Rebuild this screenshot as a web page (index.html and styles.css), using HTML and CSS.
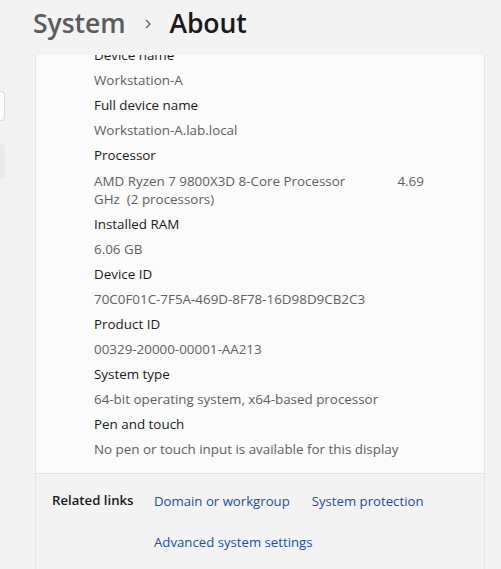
FILE: index.html
```html
<!DOCTYPE html>
<html lang="en">
<head>
<meta charset="utf-8">
<title>System › About</title>
<link rel="stylesheet" href="styles.css">
</head>
<body>
<div class="window">
  <aside class="nav">
    <div class="search"></div>
    <div class="nav-item"></div>
  </aside>
  <main class="main">
    <header class="page-title">
      <span class="crumb">System</span>
      <span class="chev">
        <svg width="12" height="12" viewBox="0 0 12 12"><path d="M4.5 2.5 L8 6 L4.5 9.5" fill="none" stroke="#5c5c5c" stroke-width="1.3" stroke-linecap="round" stroke-linejoin="round"/></svg>
      </span>
      <span class="current">About</span>
    </header>
    <div class="scroller">
      <section class="card">
        <dl class="specs">
          <dt>Device name</dt>
          <dd>Workstation-A</dd>
          <dt>Full device name</dt>
          <dd>Workstation-A.lab.local</dd>
          <dt>Processor</dt>
          <dd class="wrap">AMD Ryzen 7 9800X3D 8-Core Processor               4.69 GHz  (2 processors)</dd>
          <dt>Installed RAM</dt>
          <dd>6.06 GB</dd>
          <dt>Device ID</dt>
          <dd>70C0F01C-7F5A-469D-8F78-16D98D9CB2C3</dd>
          <dt>Product ID</dt>
          <dd>00329-20000-00001-AA213</dd>
          <dt>System type</dt>
          <dd>64-bit operating system, x64-based processor</dd>
          <dt>Pen and touch</dt>
          <dd>No pen or touch input is available for this display</dd>
        </dl>
        <div class="related">
          <div class="related-title">Related links</div>
          <div class="related-links">
            <a href="#">Domain or workgroup</a>
            <a href="#">System protection</a>
            <a href="#">Advanced system settings</a>
          </div>
        </div>
      </section>
    </div>
  </main>
</div>
</body>
</html>
```

FILE: styles.css
```css
* { box-sizing: border-box; }
html, body { margin: 0; padding: 0; }
body {
  background: #f3f3f3;
  font-family: "Open Sans", "Noto Sans", "Liberation Sans", sans-serif;
  color: #1a1a1a;
  width: 501px;
  height: 569px;
  overflow: hidden;
}
.window {
  display: flex;
  height: 569px;
}
.nav {
  width: 5px;
  flex: none;
  padding-top: 91px;
  display: flex;
  flex-direction: column;
  gap: 23px;
}
.search {
  height: 30px;
  width: 5px;
  background: #fdfdfd;
  border: 1px solid #dcdcdc;
  border-left: none;
  border-radius: 0 4px 4px 0;
}
.nav-item {
  height: 35px;
  width: 5px;
  background: #eaeaea;
  border-radius: 0 4px 4px 0;
}
.main {
  flex: 1;
  display: flex;
  flex-direction: column;
  min-width: 0;
}
.page-title {
  height: 55px;
  flex: none;
  display: flex;
  align-items: center;
  padding-left: 28px;
  padding-bottom: 9px;
  font-size: 26.6px;
  font-weight: 600;
  letter-spacing: -0.1px;
}
.crumb { color: #5c5c5c; }
.chev { display: flex; align-items: center; margin: 2px 15px 0 17px; }
.current { color: #1a1a1a; }
.scroller {
  flex: 1;
  overflow: hidden;
  padding-left: 30px;
  padding-right: 16px;
}
.card {
  margin-top: -11px;
  background: #fbfbfb;
  border: 1px solid #e5e5e5;
  border-bottom: none;
  border-radius: 4px 4px 0 0;
  min-height: 600px;
  display: flex;
  flex-direction: column;
}
.specs {
  margin: 0;
  padding: 0 40px 15px 58px;
  display: flex;
  flex-direction: column;
  gap: 6px;
  font-size: 13.4px;
}
.specs dt {
  line-height: 20px;
  color: #1a1a1a;
}
.specs dd {
  margin: 0;
  line-height: 18px;
  color: #606060;
}
.specs dd.wrap {
  white-space: pre-wrap;
  max-width: 342px;
  padding-top: 1px;
}
.related {
  flex: 1;
  background: #f3f3f3;
  border-top: 1px solid #e5e5e5;
  display: flex;
  padding: 17px 16px 0 16px;
  font-size: 13.2px;
  line-height: 20px;
}
.related-title {
  width: 102px;
  flex: none;
  font-weight: 600;
  color: #1a1a1a;
  margin-top: -1px;
}
.related-links {
  display: flex;
  flex-wrap: wrap;
  column-gap: 22px;
  row-gap: 21px;
  align-content: flex-start;
}
.related-links a {
  color: #1c4f9d;
  text-decoration: none;
}
```
